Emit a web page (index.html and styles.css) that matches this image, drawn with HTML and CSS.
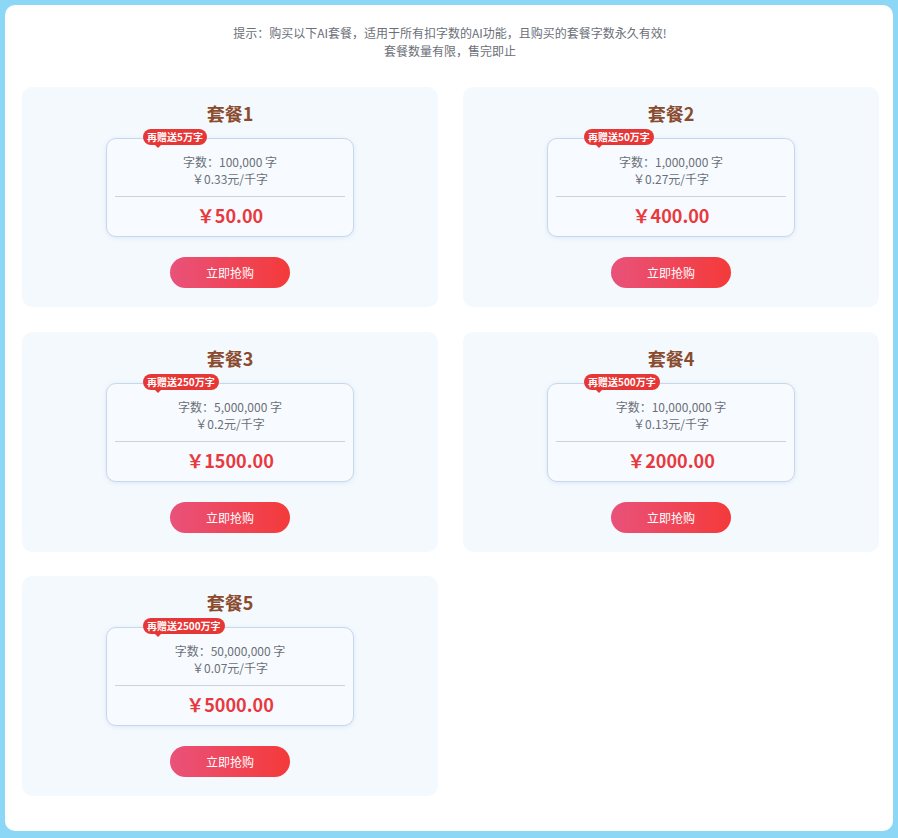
FILE: index.html
```html
<!DOCTYPE html>
<html lang="zh">
<head>
<meta charset="utf-8">
<title>AI套餐</title>
<link rel="stylesheet" href="styles.css">
</head>
<body>
<div class="panel">
  <div class="tips">
    <p>提示：购买以下AI套餐，适用于所有扣字数的AI功能，且购买的套餐字数永久有效!</p>
    <p>套餐数量有限，售完即止</p>
  </div>
  <div class="grid">
    <div class="card">
      <h3 class="title">套餐1</h3>
      <div class="box">
        <span class="badge">再赠送5万字</span>
        <p class="line">字数：100,000 字</p>
        <p class="line">￥0.33元/千字</p>
        <div class="divider"></div>
        <p class="price">￥50.00</p>
      </div>
      <button class="buy">立即抢购</button>
    </div>
    <div class="card">
      <h3 class="title">套餐2</h3>
      <div class="box">
        <span class="badge">再赠送50万字</span>
        <p class="line">字数：1,000,000 字</p>
        <p class="line">￥0.27元/千字</p>
        <div class="divider"></div>
        <p class="price">￥400.00</p>
      </div>
      <button class="buy">立即抢购</button>
    </div>
    <div class="card">
      <h3 class="title">套餐3</h3>
      <div class="box">
        <span class="badge">再赠送250万字</span>
        <p class="line">字数：5,000,000 字</p>
        <p class="line">￥0.2元/千字</p>
        <div class="divider"></div>
        <p class="price">￥1500.00</p>
      </div>
      <button class="buy">立即抢购</button>
    </div>
    <div class="card">
      <h3 class="title">套餐4</h3>
      <div class="box">
        <span class="badge">再赠送500万字</span>
        <p class="line">字数：10,000,000 字</p>
        <p class="line">￥0.13元/千字</p>
        <div class="divider"></div>
        <p class="price">￥2000.00</p>
      </div>
      <button class="buy">立即抢购</button>
    </div>
    <div class="card">
      <h3 class="title">套餐5</h3>
      <div class="box">
        <span class="badge">再赠送2500万字</span>
        <p class="line">字数：50,000,000 字</p>
        <p class="line">￥0.07元/千字</p>
        <div class="divider"></div>
        <p class="price">￥5000.00</p>
      </div>
      <button class="buy">立即抢购</button>
    </div>
  </div>
</div>
</body>
</html>
```
FILE: styles.css
```css
html, body {
  margin: 0;
  padding: 0;
}
body {
  background: #8dd7f6;
  padding: 5px 5px 7px 5px;
  font-family: "Noto Sans CJK SC", "Noto Sans", sans-serif;
}
.panel {
  background: #ffffff;
  border-radius: 10px;
  height: 826px;
  box-sizing: border-box;
  padding: 19px 15px 0 17px;
}
.tips {
  text-align: center;
  color: #6b6f78;
  font-size: 12px;
  line-height: 18px;
}
.tips p {
  margin: 0;
}
.grid {
  margin-top: 27px;
  display: grid;
  grid-template-columns: 416px 416px;
  column-gap: 25px;
  row-gap: 24.5px;
}
.card {
  background: #f4f9fe;
  border-radius: 10px;
  height: 220px;
  box-sizing: border-box;
  padding-top: 14px;
  display: flex;
  flex-direction: column;
  align-items: center;
}
.title {
  margin: 0;
  font-size: 18px;
  line-height: 24px;
  font-weight: bold;
  color: #8a4b2e;
}
.box {
  position: relative;
  margin-top: 13px;
  width: 248px;
  height: 99px;
  box-sizing: border-box;
  border: 1px solid #c6d9ec;
  border-radius: 10px;
  background: #f7fbff;
  box-shadow: 0 1px 4px rgba(150, 180, 210, 0.25);
  padding: 14px 8px 0 8px;
  text-align: center;
}
.badge {
  position: absolute;
  left: 36px;
  top: -10px;
  background: #e63636;
  color: #ffffff;
  font-size: 10px;
  font-weight: bold;
  line-height: 16px;
  padding: 0 4px;
  border-radius: 8px;
  white-space: nowrap;
}
.badge::after {
  content: "";
  position: absolute;
  left: 12px;
  bottom: -3px;
  border-left: 3px solid transparent;
  border-right: 3px solid transparent;
  border-top: 3px solid #e63636;
}
.line {
  margin: 0;
  font-size: 12px;
  line-height: 17px;
  color: #6b6f78;
}
.divider {
  height: 1px;
  background: #c9d3de;
  margin-top: 9px;
}
.price {
  margin: 5px 0 0 0;
  font-size: 18px;
  line-height: 26px;
  font-weight: bold;
  color: #e8393f;
}
.buy {
  margin-top: 20px;
  width: 120px;
  height: 31px;
  border: none;
  border-radius: 16px;
  background: linear-gradient(90deg, #e9527a, #f43a3a);
  color: #ffffff;
  font-family: "Noto Sans CJK SC", "Noto Sans", sans-serif;
  font-size: 12px;
  padding: 0;
}
```
